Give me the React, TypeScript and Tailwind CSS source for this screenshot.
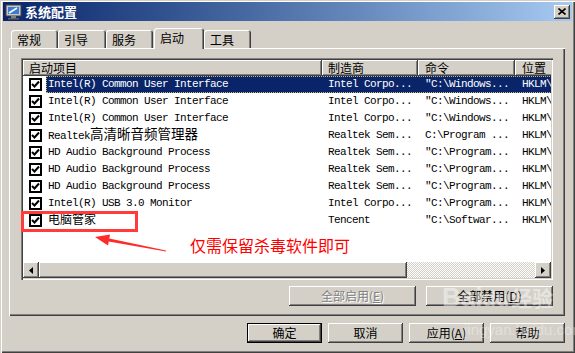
const raised =
  'shadow-[inset_-1px_-1px_#404040,inset_1px_1px_#ffffff,inset_-2px_-2px_#808080]';

const rows = [
  { name: 'Intel(R) Common User Interface', maker: 'Intel Corpo...', cmd: '"C:\\Windows...' },
  { name: 'Intel(R) Common User Interface', maker: 'Intel Corpo...', cmd: '"C:\\Windows...' },
  { name: 'Intel(R) Common User Interface', maker: 'Intel Corpo...', cmd: '"C:\\Windows...' },
  { name: 'Realtek', cjk: '高清晰音频管理器', maker: 'Realtek Sem...', cmd: 'C:\\Program ...' },
  { name: 'HD Audio Background Process', maker: 'Realtek Sem...', cmd: '"C:\\Program...' },
  { name: 'HD Audio Background Process', maker: 'Realtek Sem...', cmd: '"C:\\Program...' },
  { name: 'HD Audio Background Process', maker: 'Realtek Sem...', cmd: '"C:\\Program...' },
  { name: 'Intel(R) USB 3.0 Monitor', maker: 'Intel Corpo...', cmd: '"C:\\Program...' },
  { name: '', cjk: '电脑管家', maker: 'Tencent', cmd: '"C:\\Softwar...' },
];

const tabs = [
  { label: '常规', w: 'w-[47px]' },
  { label: '引导', w: 'w-[48px]' },
  { label: '服务', w: 'w-[47px]' },
  { label: '启动', w: 'w-[50px]', active: true },
  { label: '工具', w: 'w-[47px]' },
];

function Check() {
  return (
    <div className="w-[13px] h-[13px] border-2 border-black bg-white flex items-center justify-center">
      <svg width="9" height="9" viewBox="0 0 9 9">
        <path d="M1 4 L3.5 6.5 L8 1.5" stroke="#000" strokeWidth="2" fill="none" />
      </svg>
    </div>
  );
}

function Button({ children, disabled, def, w }: { children: any; disabled?: boolean; def?: boolean; w: string }) {
  return (
    <div
      className={`${w} h-[20px] flex items-center justify-center text-[12px] ${raised} ${
        def ? 'border border-black' : ''
      } ${disabled ? 'text-[#808080] [text-shadow:1px_1px_#ffffff]' : 'text-black'}`}
    >
      {children}
    </div>
  );
}

function Arrow({ dir }: { dir: 'l' | 'r' }) {
  return (
    <div className={`w-[16px] h-[16px] bg-[#d4d0c8] flex items-center justify-center ${raised}`}>
      <svg width="4" height="7" viewBox="0 0 4 7">
        {dir === 'l' ? <path d="M4 0 L0 3.5 L4 7 Z" fill="#000" /> : <path d="M0 0 L4 3.5 L0 7 Z" fill="#000" />}
      </svg>
    </div>
  );
}

export default function App() {
  return (
    <div className="relative w-[575px] h-[353px] bg-[#d4d0c8] overflow-hidden font-['Noto_Sans_CJK_SC','Liberation_Sans',sans-serif] shadow-[inset_1px_1px_#d4d0c8,inset_2px_2px_#ffffff,inset_-1px_-1px_#404040,inset_-2px_-2px_#808080] pt-[2px] px-[3px]">
      {/* title bar */}
      <div className="h-[19px] flex items-center bg-gradient-to-r from-[#0a246a] to-[#a6caf0] pl-[2px] pr-[2px]">
        <svg width="17" height="16" viewBox="0 0 17 16" className="shrink-0">
          <rect x="1" y="1" width="15" height="11" fill="#c8c8c8" stroke="#404040" />
          <rect x="3" y="3" width="11" height="7" fill="#3a7bd5" />
          <path d="M4 9 L12 4" stroke="#ffffff" strokeWidth="1.5" />
          <rect x="6" y="12" width="5" height="2" fill="#808080" />
          <rect x="3" y="14" width="11" height="1.5" fill="#606060" />
        </svg>
        <span className="ml-[3px] text-white font-bold text-[13px] leading-none">系统配置</span>
        <div className={`ml-auto w-[16px] h-[14px] bg-[#d4d0c8] flex items-center justify-center ${raised}`}>
          <svg width="8" height="7" viewBox="0 0 8 7">
            <path d="M0.5 0.5 L7.5 6.5 M7.5 0.5 L0.5 6.5" stroke="#000" strokeWidth="1.6" />
          </svg>
        </div>
      </div>

      <div className="pl-[6px] pr-[7px]">
        {/* tabs */}
        <div className="mt-[7px] h-[20px] flex items-end pl-[2px]">
          {tabs.map((t) => (
            <div
              key={t.label}
              className={`${t.w} ${
                t.active ? 'h-[21px] -mb-[1px] relative z-10 pt-[3px] ml-[1px]' : 'h-[18px] pt-[3px]'
              } bg-[#d4d0c8] rounded-t-[3px] shadow-[inset_1px_1px_#ffffff,inset_-1px_0_#404040,inset_-2px_0_#808080] pl-[6px] text-[12px] leading-[13px] text-black`}
            >
              {t.label}
            </div>
          ))}
        </div>

        {/* panel */}
        <div className="h-[268px] px-[12px] pt-[10px] shadow-[inset_1px_1px_#ffffff,inset_-1px_-1px_#404040,inset_-2px_-2px_#808080]">
          <div className="w-[532px] h-[222px] p-[2px] bg-white flex flex-col shadow-[inset_1px_1px_#808080,inset_2px_2px_#404040,inset_-1px_-1px_#ffffff,inset_-2px_-2px_#d4d0c8]">
            {/* header */}
            <div className="h-[16px] shrink-0 flex bg-[#d4d0c8] text-[12px] leading-[16px] text-black overflow-hidden">
              <div className={`w-[299px] shrink-0 pl-[6px] ${raised}`}>启动项目</div>
              <div className={`w-[96px] shrink-0 pl-[6px] ${raised}`}>制造商</div>
              <div className={`w-[97px] shrink-0 pl-[7px] ${raised}`}>命令</div>
              <div className={`w-[60px] shrink-0 pl-[7px] ${raised}`}>位置</div>
            </div>
            {/* rows */}
            <div className="flex-1 overflow-x-clip">
              {rows.map((r, i) => {
                const sel = i === 0;
                return (
                  <div key={i} className="h-[17px] flex items-center">
                    <div className="w-[23px] shrink-0 pl-[6px]">
                      <Check />
                    </div>
                    <div
                      className={`flex-1 h-[17px] flex items-center overflow-x-clip whitespace-nowrap font-['Liberation_Mono',monospace] text-[11px] leading-[17px] tracking-[-0.6px] ${
                        sel
                          ? 'bg-[#0a246a] text-white outline-1 outline-dotted outline-[#c8b870] -outline-offset-1'
                          : 'text-black'
                      }`}
                    >
                      <div className="w-[276px] shrink-0 pl-[2px]">
                        {r.name}
                        {r.cjk && (
                          <span
                            className={`font-['Noto_Sans_CJK_SC',sans-serif] tracking-normal leading-[15px] ${
                              r.name ? 'text-[13.5px]' : 'text-[12px]'
                            }`}
                          >
                            {r.cjk}
                          </span>
                        )}
                      </div>
                      <div className="w-[96px] shrink-0 pl-[6px]">{r.maker}</div>
                      <div className="w-[97px] shrink-0 pl-[7px]">{r.cmd}</div>
                      <div className="shrink-0 pl-[7px]">HKLM\</div>
                    </div>
                  </div>
                );
              })}
            </div>
            {/* h scrollbar */}
            <div className="h-[16px] shrink-0 flex">
              <Arrow dir="l" />
              <div className={`w-[368px] h-[16px] bg-[#d4d0c8] ${raised}`} />
              <div className="flex-1 bg-[repeating-conic-gradient(#ffffff_0%_25%,#d4d0c8_0%_50%)] bg-[length:2px_2px]" />
              <Arrow dir="r" />
            </div>
          </div>

          <div className="mt-[6px] flex justify-end gap-[10px]">
            <Button w="w-[127px]" disabled>
              全部启用(<u>E</u>)
            </Button>
            <Button w="w-[127px]">
              全部禁用(<u>D</u>)
            </Button>
          </div>
        </div>

        {/* bottom buttons */}
        <div className="mt-[7px] flex justify-end gap-[6px]">
          <Button w="w-[75px]" def>
            确定
          </Button>
          <Button w="w-[75px]">取消</Button>
          <Button w="w-[75px]">
            应用(<u>A</u>)
          </Button>
          <Button w="w-[75px]">帮助</Button>
        </div>
      </div>

      {/* annotation overlay */}
      <div className="absolute left-[21px] top-[211px] w-[117px] h-[21px] border-[3px] border-[#ff3b3b]" />
      <svg className="absolute left-0 top-0 pointer-events-none" width="575" height="353">
        <polygon
          points="95,237 110,234.5 109.3,238.5 166,250.4 166,251.6 108.7,241.5 108,245.5"
          fill="#ff2b2b"
        />
      </svg>
      <div className="absolute left-[190px] top-[235px] text-[16px] leading-[20px] text-[#ff0000] font-['Noto_Sans_CJK_SC',sans-serif]">
        仅需保留杀毒软件即可
      </div>

      {/* watermark */}
      <div className="absolute left-[442px] top-[284px] text-[26px] font-bold leading-none text-white/45 font-['Liberation_Sans',sans-serif] pointer-events-none">
        Bai<span className="text-[22px]">du</span>
        <span className="ml-[2px] text-[21px] font-['Noto_Sans_CJK_SC',sans-serif]">经验</span>
      </div>
      <div className="absolute left-[464px] top-[322px] text-[15px] leading-none text-white/35 font-['Liberation_Sans',sans-serif] pointer-events-none">
        jingyan.baidu.com
      </div>
    </div>
  );
}
